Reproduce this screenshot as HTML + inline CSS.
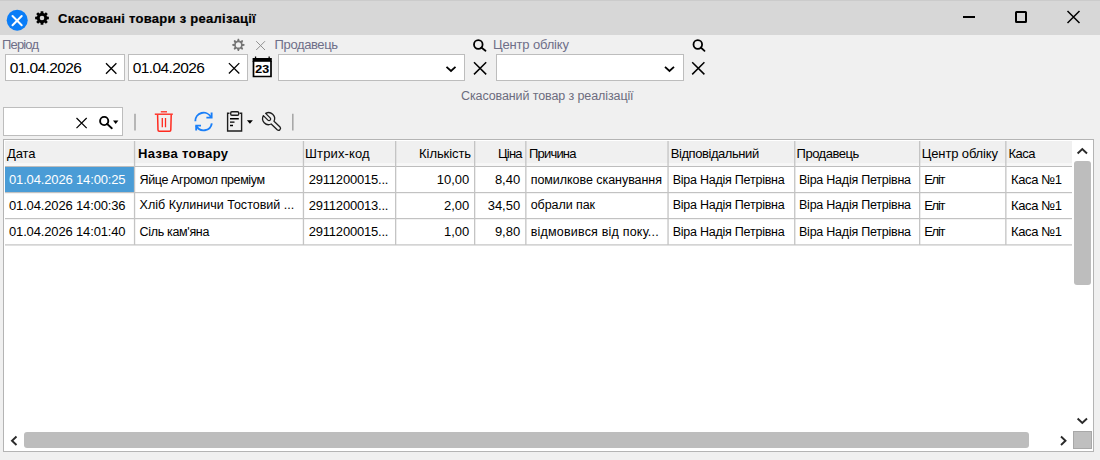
<!DOCTYPE html>
<html><head><meta charset="utf-8">
<style>
*{margin:0;padding:0;box-sizing:border-box}
html,body{width:1100px;height:460px;overflow:hidden;background:#f0f0f0;font-family:"Liberation Sans",sans-serif;color:#000}
.a{position:absolute}
.t{position:absolute;white-space:nowrap;line-height:1}
.box{position:absolute;background:#fff;border:1px solid #bdbdbd}
svg{position:absolute;overflow:visible}
</style></head><body>
<div class="a" style="left:0;top:0;width:1100px;height:35px;background:#d7d7d7;border-top:1px solid #cbcbcb"></div>
<svg style="left:0;top:0" width="60" height="35">
<circle cx="17.2" cy="20.2" r="10.5" fill="#0a7df7"/>
<path d="M12.5 16L21.7 25.2M21.7 16L12.5 25.2" stroke="#fff" stroke-width="2" stroke-linecap="round"/>
</svg>
<svg style="left:0;top:0" width="60" height="35"><path fill="#000" fill-rule="evenodd" d="M47.00 16.56 L48.87 16.65 L48.87 19.35 L47.00 19.44 L46.55 20.52 L47.81 21.90 L45.90 23.81 L44.52 22.55 L43.44 23.00 L43.35 24.87 L40.65 24.87 L40.56 23.00 L39.48 22.55 L38.10 23.81 L36.19 21.90 L37.45 20.52 L37.00 19.44 L35.13 19.35 L35.13 16.65 L37.00 16.56 L37.45 15.48 L36.19 14.10 L38.10 12.19 L39.48 13.45 L40.56 13.00 L40.65 11.13 L43.35 11.13 L43.44 13.00 L44.52 13.45 L45.90 12.19 L47.81 14.10 L46.55 15.48ZM44.30 18.00A2.3 2.3 0 1 0 39.70 18.00A2.3 2.3 0 1 0 44.30 18.00Z"/></svg>
<div class="t" style="left:58.00px;top:12.00px;font-size:13px;letter-spacing:0.267px;color:#000;font-weight:bold;-webkit-text-stroke:0.2px #000;">Скасовані товари з реалізації</div>
<div class="a" style="left:963px;top:16.3px;width:12px;height:2px;background:#000"></div>
<div class="a" style="left:1015px;top:11px;width:12px;height:12px;border:2px solid #000;border-radius:1.5px"></div>
<svg style="left:0;top:0" width="1100" height="35"><path d="M1067.5 11L1079.5 23M1079.5 11L1067.5 23" stroke="#000" stroke-width="1.5"/></svg>
<div class="t" style="left:2.00px;top:38.00px;font-size:13px;letter-spacing:-0.844px;color:#6e6e88;">Період</div>
<div class="t" style="left:274.60px;top:38.00px;font-size:13px;letter-spacing:-0.393px;color:#6e6e88;">Продавець</div>
<div class="t" style="left:493.00px;top:38.00px;font-size:13px;letter-spacing:-0.156px;color:#6e6e88;">Центр обліку</div>
<div class="box" style="left:5px;top:54px;width:120px;height:27px"></div>
<div class="box" style="left:128px;top:54px;width:120px;height:27px"></div>
<div class="box" style="left:278px;top:54px;width:187px;height:27px"></div>
<div class="box" style="left:496px;top:54px;width:188px;height:27px"></div>
<div class="box" style="left:3px;top:107px;width:120px;height:29px"></div>
<div class="t" style="left:9.80px;top:59.78px;font-size:15.5px;letter-spacing:-0.620px;color:#000;">01.04.2026</div>
<div class="t" style="left:132.80px;top:59.78px;font-size:15.5px;letter-spacing:-0.620px;color:#000;">01.04.2026</div>
<svg style="left:0;top:0" width="1100" height="460"><path d="M106.0 63.3L116.4 73.7M116.4 63.3L106.0 73.7" stroke="#000" stroke-width="1.3" fill="none"/><path d="M228.9 63.099999999999994L239.29999999999998 73.5M239.29999999999998 63.099999999999994L228.9 73.5" stroke="#000" stroke-width="1.3" fill="none"/><path d="M256.20000000000005 41.2L265.0 50.0M265.0 41.2L256.20000000000005 50.0" stroke="#909090" stroke-width="1.0" fill="none"/><path d="M474.0 62.199999999999996L486.20000000000005 74.39999999999999M486.20000000000005 62.199999999999996L474.0 74.39999999999999" stroke="#000" stroke-width="1.5" fill="none"/><path d="M692.1999999999999 62.199999999999996L704.4 74.39999999999999M704.4 62.199999999999996L692.1999999999999 74.39999999999999" stroke="#000" stroke-width="1.5" fill="none"/><path d="M76.5 118.0L86.69999999999999 128.2M86.69999999999999 118.0L76.5 128.2" stroke="#000" stroke-width="1.2" fill="none"/><path d="M446.5 66.8L451 71L455.5 66.8" stroke="#000" stroke-width="1.8" fill="none"/><path d="M665 66.8L669.5 71L674 66.8" stroke="#000" stroke-width="1.8" fill="none"/><circle cx="478.3" cy="44.5" r="4.3" stroke="#000" stroke-width="1.8" fill="none"/><path d="M481.31 47.51L485.5 50.8" stroke="#000" stroke-width="1.8" stroke-linecap="round"/><circle cx="697.8" cy="44.5" r="4.3" stroke="#000" stroke-width="1.8" fill="none"/><path d="M700.81 47.51L704.5 50.8" stroke="#000" stroke-width="1.8" stroke-linecap="round"/><circle cx="104.2" cy="121" r="4.1" stroke="#000" stroke-width="1.9" fill="none"/><path d="M107.07 123.87L111.8 128.2" stroke="#000" stroke-width="1.9" stroke-linecap="round"/><path d="M113 120.4L118.4 120.4L115.7 123.9Z" fill="#000"/><path d="M246.9 120.2L252.9 120.2L249.9 123.8Z" fill="#000"/><path fill="#747474" fill-rule="evenodd" d="M237.82 38.73 L238.98 38.73 L239.89 41.30 L242.35 40.12 L243.18 40.95 L242.00 43.41 L244.57 44.32 L244.57 45.48 L242.00 46.39 L243.18 48.85 L242.35 49.68 L239.89 48.50 L238.98 51.07 L237.82 51.07 L236.91 48.50 L234.45 49.68 L233.62 48.85 L234.80 46.39 L232.23 45.48 L232.23 44.32 L234.80 43.41 L233.62 40.95 L234.45 40.12 L236.91 41.30ZM241.00 44.90A2.6 2.6 0 1 0 235.80 44.90A2.6 2.6 0 1 0 241.00 44.90Z"/><g>
<path d="M253.5 61L253.5 76.5L271 76.5L271 61" stroke="#000" stroke-width="1.7" fill="#fff"/>
<rect x="252.6" y="58" width="19.2" height="3.8" fill="#000"/>
<rect x="254.9" y="56.5" width="1.3" height="2" fill="#000"/><rect x="268.5" y="56.5" width="1.3" height="2" fill="#000"/>
<text stroke="#000" stroke-width="0.15" transform="translate(262.2 73) scale(1.15 1)" x="0" y="0" font-family="Liberation Sans" font-weight="bold" font-size="10.8" text-anchor="middle" fill="#000">23</text>
</g><g stroke="#ff2a1f" fill="none">
<path d="M157.6 115L158 130A1.2 1.2 0 0 0 159.2 131.2L169.6 131.2A1.2 1.2 0 0 0 170.8 130L171.2 115" stroke-width="1.5"/>
<path d="M154.8 114.2L172.8 114.2" stroke-width="1.4"/>
<path d="M160.8 111.8L167 111.8" stroke-width="1.3"/>
<path d="M162.3 118L162.3 127.3M165.5 118L165.5 127.3" stroke-width="1.3"/>
</g><g stroke="#1a7ff8" fill="none" stroke-width="1.9">
<path d="M195.3 121.3A8.3 8.3 0 0 1 211 117.3"/>
<path d="M211.6 112.6L211.6 117.6L206.4 117.6"/>
<path d="M211.8 123.3A8.3 8.3 0 0 1 196.2 125.8"/>
<path d="M196.2 130.4L196.2 125.6L201 125.6"/>
</g><g stroke="#1e1e1e" fill="none">
<path d="M229.5 113.2L227.6 113.2L227.6 131L241.6 131L241.6 113.2L239.6 113.2" stroke-width="1.4"/>
<rect x="230.7" y="111.8" width="8" height="3.4" rx="1.2" stroke-width="1.4"/>
<path d="M230 118.7L238.8 118.7M230 122.1L234.5 122.1M230 125.5L233 125.5" stroke-width="1.4" stroke="#000"/>
</g><path d="M274.01 121.19L280.01 126.99A2.0 2.0 0 0 1 277.19 129.81L271.19 124.01A6.0 6.0 0 0 1 263.38 115.64L267.89 120.16A1.6 1.6 0 0 0 270.16 117.89L265.64 113.38A6.0 6.0 0 0 1 274.01 121.19Z" stroke="#1e1e1e" stroke-width="1.3" fill="none" stroke-linejoin="round"/><path d="M135 113.8L135 130.5M292.8 113.8L292.8 130.5" stroke="#a8a8a8" stroke-width="1.6"/></svg>
<div class="t" style="left:461.00px;top:90.12px;font-size:12.5px;letter-spacing:-0.104px;color:#6c6c7e;">Скасований товар з реалізації</div>
<div class="a" style="left:3px;top:139px;width:1091px;height:313px;background:#fff;border:1px solid #b4b4b4"></div>
<div class="a" style="left:5px;top:141px;width:1067px;height:25px;background:#f0f0f0"></div>
<div class="a" style="left:5px;top:167px;width:129.3px;height:25px;background:#4a9cd6"></div>
<svg style="left:0;top:0" width="1100" height="460"><rect x="5" y="163" width="1067" height="3" fill="#f7f7f7"/><rect x="5" y="166" width="1067" height="1" fill="#bdbdbd"/><rect x="5" y="192.0" width="1067" height="1.2" fill="#c2c2c2"/><rect x="5" y="218.0" width="1067" height="1.2" fill="#c2c2c2"/><rect x="5" y="244.3" width="1067" height="1.2" fill="#c2c2c2"/><rect x="133.9" y="141" width="1.3" height="104" fill="#c4c4c4"/><rect x="302.79999999999995" y="141" width="1.3" height="104" fill="#c4c4c4"/><rect x="395.0" y="141" width="1.3" height="104" fill="#c4c4c4"/><rect x="474.0" y="141" width="1.3" height="104" fill="#c4c4c4"/><rect x="525.1999999999999" y="141" width="1.3" height="104" fill="#c4c4c4"/><rect x="667.4" y="141" width="1.3" height="104" fill="#c4c4c4"/><rect x="794.1" y="141" width="1.3" height="104" fill="#c4c4c4"/><rect x="919.0" y="141" width="1.3" height="104" fill="#c4c4c4"/><rect x="1005.1999999999999" y="141" width="1.3" height="104" fill="#c4c4c4"/></svg>
<div class="t" style="left:7.00px;top:147.00px;font-size:13px;letter-spacing:-0.066px;color:#000;">Дата</div>
<div class="t" style="left:138.00px;top:147.00px;font-size:13px;letter-spacing:0.355px;color:#000;font-weight:bold;">Назва товару</div>
<div class="t" style="left:305.00px;top:147.00px;font-size:13px;letter-spacing:0.132px;color:#000;">Штрих-код</div>
<div class="t" style="left:419.10px;top:147.00px;font-size:13px;letter-spacing:-0.078px;color:#000;">Кількість</div>
<div class="t" style="left:498.00px;top:147.00px;font-size:13px;letter-spacing:-0.807px;color:#000;">Ціна</div>
<div class="t" style="left:528.90px;top:147.00px;font-size:13px;letter-spacing:-0.780px;color:#000;">Причина</div>
<div class="t" style="left:670.70px;top:147.00px;font-size:13px;letter-spacing:-0.429px;color:#000;">Відповідальний</div>
<div class="t" style="left:796.50px;top:147.00px;font-size:13px;letter-spacing:-0.468px;color:#000;">Продавець</div>
<div class="t" style="left:921.80px;top:147.00px;font-size:13px;letter-spacing:-0.138px;color:#000;">Центр обліку</div>
<div class="t" style="left:1008.50px;top:147.00px;font-size:13px;letter-spacing:-0.510px;color:#000;">Каса</div>
<div class="t" style="left:9.00px;top:173.20px;font-size:13px;letter-spacing:-0.149px;color:#fff;">01.04.2026 14:00:25</div>
<div class="t" style="left:139.60px;top:173.62px;font-size:12.5px;letter-spacing:-0.402px;color:#000;">Яйце Агромол преміум</div>
<div class="t" style="left:308.70px;top:173.20px;font-size:13px;letter-spacing:-0.198px;color:#000;">2911200015...</div>
<div class="t" style="left:436.77px;top:173.20px;font-size:13px;letter-spacing:0.000px;color:#000;">10,00</div>
<div class="t" style="left:494.90px;top:173.20px;font-size:13px;letter-spacing:0.000px;color:#000;">8,40</div>
<div class="t" style="left:530.70px;top:173.62px;font-size:12.5px;letter-spacing:-0.048px;color:#000;">помилкове сканування</div>
<div class="t" style="left:672.70px;top:173.62px;font-size:12.5px;letter-spacing:-0.236px;color:#000;">Віра Надія Петрівна</div>
<div class="t" style="left:799.00px;top:173.62px;font-size:12.5px;letter-spacing:-0.236px;color:#000;">Віра Надія Петрівна</div>
<div class="t" style="left:924.20px;top:173.20px;font-size:13px;letter-spacing:-1.265px;color:#000;">Еліт</div>
<div class="t" style="left:1011.00px;top:173.20px;font-size:13px;letter-spacing:-0.388px;color:#000;">Каса №1</div>
<div class="t" style="left:9.00px;top:198.80px;font-size:13px;letter-spacing:-0.149px;color:#000;">01.04.2026 14:00:36</div>
<div class="t" style="left:139.60px;top:199.22px;font-size:12.5px;letter-spacing:0.015px;color:#000;">Хліб Кулиничи Тостовий ...</div>
<div class="t" style="left:308.70px;top:198.80px;font-size:13px;letter-spacing:-0.198px;color:#000;">2911200013...</div>
<div class="t" style="left:444.00px;top:198.80px;font-size:13px;letter-spacing:0.000px;color:#000;">2,00</div>
<div class="t" style="left:487.67px;top:198.80px;font-size:13px;letter-spacing:0.000px;color:#000;">34,50</div>
<div class="t" style="left:530.70px;top:199.22px;font-size:12.5px;letter-spacing:-0.068px;color:#000;">обрали пак</div>
<div class="t" style="left:672.70px;top:199.22px;font-size:12.5px;letter-spacing:-0.236px;color:#000;">Віра Надія Петрівна</div>
<div class="t" style="left:799.00px;top:199.22px;font-size:12.5px;letter-spacing:-0.236px;color:#000;">Віра Надія Петрівна</div>
<div class="t" style="left:924.20px;top:198.80px;font-size:13px;letter-spacing:-1.265px;color:#000;">Еліт</div>
<div class="t" style="left:1011.00px;top:198.80px;font-size:13px;letter-spacing:-0.388px;color:#000;">Каса №1</div>
<div class="t" style="left:9.00px;top:225.10px;font-size:13px;letter-spacing:-0.149px;color:#000;">01.04.2026 14:01:40</div>
<div class="t" style="left:139.60px;top:225.52px;font-size:12.5px;letter-spacing:-0.326px;color:#000;">Сіль кам'яна</div>
<div class="t" style="left:308.70px;top:225.10px;font-size:13px;letter-spacing:-0.198px;color:#000;">2911200015...</div>
<div class="t" style="left:444.00px;top:225.10px;font-size:13px;letter-spacing:0.000px;color:#000;">1,00</div>
<div class="t" style="left:494.90px;top:225.10px;font-size:13px;letter-spacing:0.000px;color:#000;">9,80</div>
<div class="t" style="left:530.70px;top:225.52px;font-size:12.5px;letter-spacing:0.200px;color:#000;">відмовився від поку...</div>
<div class="t" style="left:672.70px;top:225.52px;font-size:12.5px;letter-spacing:-0.236px;color:#000;">Віра Надія Петрівна</div>
<div class="t" style="left:799.00px;top:225.52px;font-size:12.5px;letter-spacing:-0.236px;color:#000;">Віра Надія Петрівна</div>
<div class="t" style="left:924.20px;top:225.10px;font-size:13px;letter-spacing:-1.265px;color:#000;">Еліт</div>
<div class="t" style="left:1011.00px;top:225.10px;font-size:13px;letter-spacing:-0.388px;color:#000;">Каса №1</div>
<div class="a" style="left:1073.7px;top:160.5px;width:17.2px;height:124px;background:#bdbdbd;border-radius:3px"></div>
<div class="a" style="left:24px;top:432px;width:1005px;height:16px;background:#bdbdbd;border-radius:3px"></div>
<div class="a" style="left:1073px;top:431px;width:18.5px;height:18.3px;background:#bfbfbf;border:1px solid #a8a8a8"></div>
<svg style="left:0;top:0" width="1100" height="460"><path d="M1077.6 153.5L1082.3 149L1087 153.5" stroke="#2a2a2a" stroke-width="1.9" fill="none"/><path d="M1077.6 418.5L1082.3 423L1087 418.5" stroke="#2a2a2a" stroke-width="1.9" fill="none"/><path d="M16.5 436.5L12 440.7L16.5 445" stroke="#2a2a2a" stroke-width="1.9" fill="none"/><path d="M1061 436.5L1065.5 440.7L1061 445" stroke="#2a2a2a" stroke-width="1.9" fill="none"/></svg>
</body></html>
